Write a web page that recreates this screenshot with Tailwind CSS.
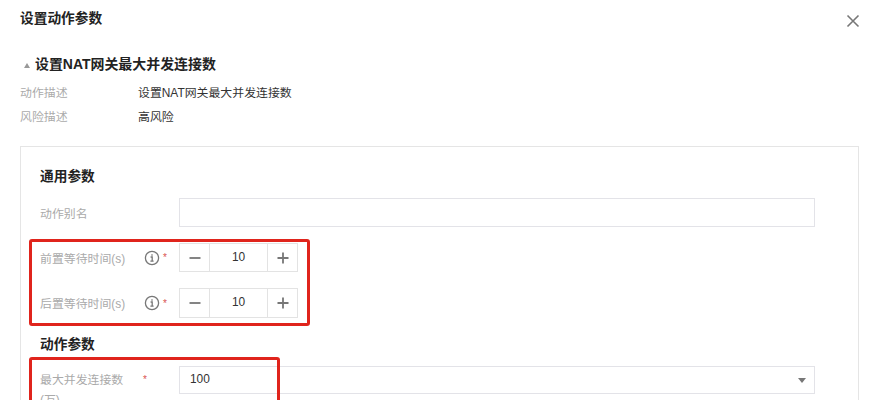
<!DOCTYPE html>
<html lang="zh-CN">
<head>
    <meta charset="UTF-8">
    <title>设置动作参数</title>
    <script src="https://cdn.jsdelivr.net/npm/@tailwindcss/browser@4"></script>
</head>
<body class="bg-white overflow-hidden h-[400px] font-['Liberation_Sans','Noto_Sans_CJK_SC',sans-serif] text-[11.9px] text-[#333]">
    <div class="relative h-[400px] overflow-hidden px-5">
        <!-- Header -->
        <div class="flex justify-between h-[36px] pt-[9px]">
            <h1 class="text-[13.7px] leading-[20px] font-bold text-[#222]">设置动作参数</h1>
            <svg class="w-[14px] h-[14px] mt-[5px] mr-[-1px]" viewBox="0 0 14 14" fill="none" stroke="#777" stroke-width="1.6"><path d="M1.5 1.5l11 11M12.5 1.5l-11 11"/></svg>
        </div>

        <!-- Action summary -->
        <div class="flex items-center h-[20px] mt-[18px] gap-[5px]">
            <span class="w-0 h-0 ml-1 mt-[2px] border-x-[3px] border-x-transparent border-b-[5px] border-b-[#999]"></span>
            <h2 class="text-[13.95px] leading-[20px] font-bold text-[#222]">设置NAT网关最大并发连接数</h2>
        </div>
        <div class="flex h-[24px] mt-[8px] items-center">
            <span class="w-[118px] text-[#aaa]">动作描述</span><span>设置NAT网关最大并发连接数</span>
        </div>
        <div class="flex h-[24px] items-center">
            <span class="w-[118px] text-[#aaa]">风险描述</span><span>高风险</span>
        </div>

        <!-- Params panel -->
        <div class="mt-[16px] w-[839px] h-[300px] border border-[#e5e5e5] pl-[19px] pt-[20px]">
            <h3 class="text-[13.7px] leading-[20px] font-bold text-[#222]">通用参数</h3>
            <div class="flex items-center mt-[11px] h-[29px]">
                <span class="w-[139px] pt-[4px] text-[#aaa]">动作别名</span>
                <div class="w-[636px] h-[29px] border border-[#e3e3e8]"></div>
            </div>

            <div class="flex items-center mt-[16px] h-[29px]">
                <span class="w-[104px] pt-[4px] text-[#aaa]">前置等待时间(s)</span>
                <svg class="w-[16px] h-[16px]" viewBox="0 0 16 16" fill="none" stroke="#777" stroke-width="1.3"><circle cx="8" cy="8" r="6.6"/><path d="M6.6 7h1.6v4.2M6.4 11.2h3.2M8 4.2v1.5"/></svg>
                <span class="w-[19px] pl-[3px] text-[10px] text-[#d9534f]">*</span>
                <div class="flex w-[119px] h-[29px] border border-[#e3e3e3] items-center text-[#333]">
                    <span class="flex items-center justify-center w-[30px] h-full border-r border-[#e3e3e3]"><svg class="w-[12px] h-[12px]" viewBox="0 0 12 12" stroke="#777" stroke-width="1.8"><path d="M0.5 6h11"/></svg></span>
                    <span class="flex-1 text-center">10</span>
                    <span class="flex items-center justify-center w-[30px] h-full border-l border-[#e3e3e3]"><svg class="w-[12px] h-[12px]" viewBox="0 0 12 12" stroke="#777" stroke-width="1.8"><path d="M0.5 6h11M6 0.5v11"/></svg></span>
                </div>
            </div>
            <div class="flex items-center mt-[16px] h-[30px]">
                <span class="w-[104px] pt-[3px] text-[#aaa]">后置等待时间(s)</span>
                <svg class="w-[16px] h-[16px]" viewBox="0 0 16 16" fill="none" stroke="#777" stroke-width="1.3"><circle cx="8" cy="8" r="6.6"/><path d="M6.6 7h1.6v4.2M6.4 11.2h3.2M8 4.2v1.5"/></svg>
                <span class="w-[19px] pl-[3px] text-[10px] text-[#d9534f]">*</span>
                <div class="flex w-[119px] h-[30px] border border-[#e3e3e3] items-center text-[#333]">
                    <span class="flex items-center justify-center w-[30px] h-full border-r border-[#e3e3e3]"><svg class="w-[12px] h-[12px]" viewBox="0 0 12 12" stroke="#777" stroke-width="1.8"><path d="M0.5 6h11"/></svg></span>
                    <span class="flex-1 text-center">10</span>
                    <span class="flex items-center justify-center w-[30px] h-full border-l border-[#e3e3e3]"><svg class="w-[12px] h-[12px]" viewBox="0 0 12 12" stroke="#777" stroke-width="1.8"><path d="M0.5 6h11M6 0.5v11"/></svg></span>
                </div>
            </div>

            <h3 class="text-[13.7px] leading-[20px] font-bold text-[#222] mt-[17px]">动作参数</h3>
            <div class="flex mt-[11px]">
                <span class="w-[102px] leading-[20px] pt-[4px] text-[#aaa]">最大并发连接数(万)</span>
                <span class="w-[37px] pl-[1px] pt-[4px] leading-[20px] text-[10px] text-[#d9534f]">*</span>
                <div class="relative flex items-center w-[636px] h-[28px] border border-[#e3e3e8] pl-[10px] text-[#333]">
                    100
                    <span class="absolute right-[8px] top-[11px] w-0 h-0 border-x-[4px] border-x-transparent border-t-[5px] border-t-[#777]"></span>
                </div>
            </div>
        </div>

        <!-- Red highlight annotations -->
        <div class="absolute left-[29px] top-[239px] w-[281px] h-[87px] border-[3px] border-[#e0241c] rounded-[3px]"></div>
        <div class="absolute left-[29px] top-[357px] w-[251px] h-[80px] border-[3px] border-[#e0241c] rounded-[3px]"></div>
    </div>
</body>
</html>
